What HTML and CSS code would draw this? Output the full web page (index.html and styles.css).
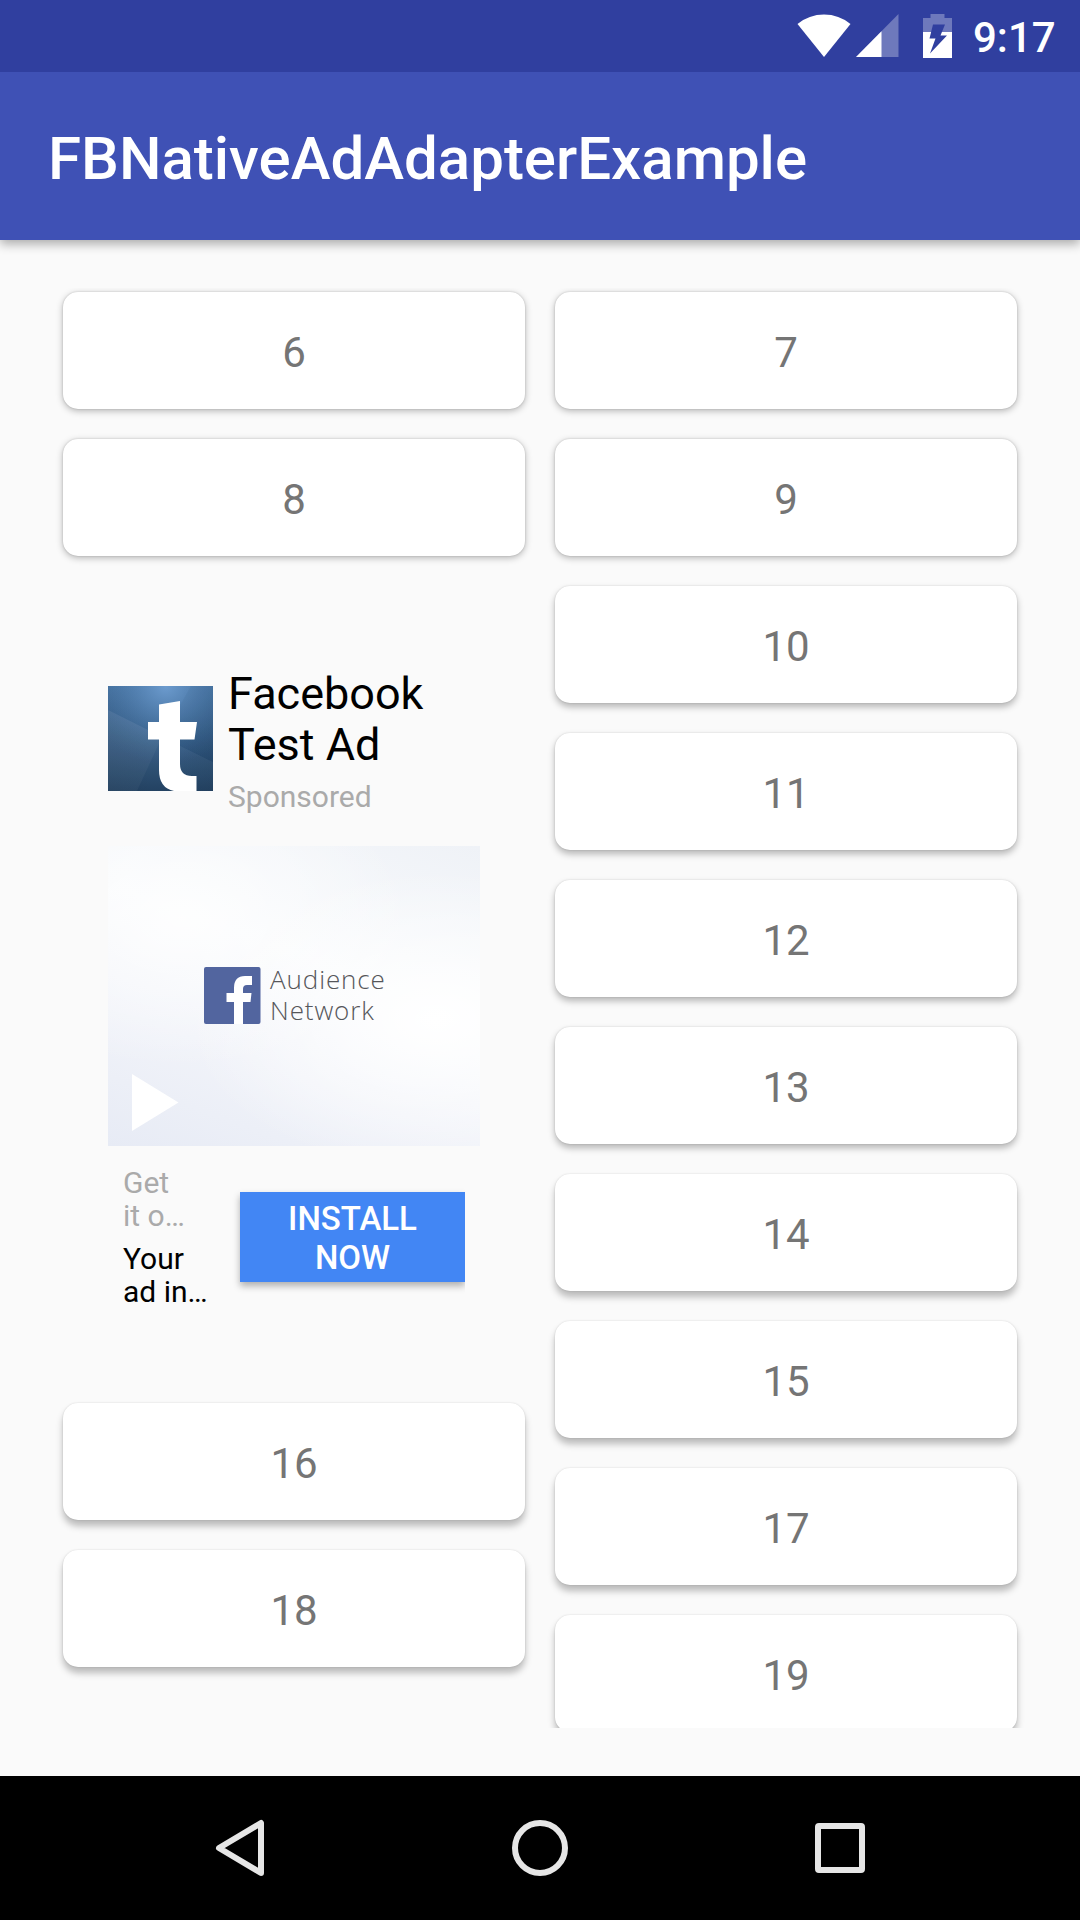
FILE: index.html
```html
<!DOCTYPE html>
<html lang="en">
<head>
<meta charset="utf-8">
<title>FBNativeAdAdapterExample</title>
<link rel="stylesheet" href="styles.css">
</head>
<body>
<div class="screen">
  <div class="status-bar">
    <svg class="wifi" width="54" height="44" viewBox="0 0 54 44"><path d="M27 43 L0.5 10 Q12 0.5 27 0.5 Q42 0.5 53.5 10 Z" fill="#fff"/></svg>
    <svg class="signal" width="43" height="43" viewBox="0 0 43 43"><path d="M0 43 L42.500 0 V43 Z" fill="#fff" fill-opacity=".3"/><path d="M0 43 L25.500 17.200 V43 Z" fill="#fff"/></svg>
    <svg class="battery" width="29" height="44" viewBox="0 0 29 44">
      <path d="M7.500 0 H21.500 V4 H29 V18 H0 V4 H7.500 Z" fill="#fff" fill-opacity=".3"/>
      <path d="M0 18 H29 V44 H0 Z" fill="#fff"/>
      <path d="M10 10.500 H22 L17.500 21.500 H24 L7 39.500 L12.500 24.500 H6.500 Z" fill="#303f9f"/>
    </svg>
    <span class="clock">9:17</span>
  </div>
  <header class="toolbar"><h1 class="title">FBNativeAdAdapterExample</h1></header>
  <main class="content">
    <div class="list">
      <div class="column">
        <div class="card high">6</div>
        <div class="card high">8</div>
        <section class="ad">
          <div class="ad-head">
            <svg class="ad-icon" width="105" height="105" viewBox="0 0 105 105">
              <defs>
                <linearGradient id="base" x1="0" y1="0" x2="0" y2="1"><stop offset="0" stop-color="#4d7cae"/><stop offset="1" stop-color="#1b3b5c"/></linearGradient>
                <radialGradient id="glow" cx=".55" cy="0" r=".75"><stop offset="0" stop-color="#709fd2" stop-opacity=".9"/><stop offset="1" stop-color="#39648f" stop-opacity="0"/></radialGradient>
                <linearGradient id="edge" x1="0" y1="0" x2="1" y2="0"><stop offset="0" stop-color="#123" stop-opacity=".1"/><stop offset=".4" stop-color="#123" stop-opacity="0"/><stop offset=".7" stop-color="#123" stop-opacity="0"/><stop offset="1" stop-color="#123" stop-opacity=".1"/></linearGradient>
              </defs>
              <rect width="105" height="105" fill="url(#base)"/>
              <rect width="105" height="105" fill="url(#edge)"/>
              <rect width="105" height="105" fill="url(#glow)"/>
              <path d="M0 24 L54 51 L29 105 H0 Z M54 51 L105 76 V105 H29 Z" fill="#fff" fill-opacity=".04"/>
              <path d="M0 24 L54 51 L29 105 H0 Z" fill="#fff" fill-opacity=".04"/>
              <path d="M83 0 H105 V76 L54 51 Z" fill="#0b2b50" fill-opacity=".06"/>
              <path d="M51 18.500 L72 15 V36 H89 L86.500 53.500 H72 V78 Q72 90 84 90 H88.500 V105 H66 Q51 102 51 84 V53.500 H40 V36 H51 Z" fill="#fff"/>
            </svg>
            <div class="ad-heading">
              <div class="ad-title">Facebook<br>Test Ad</div>
              <div class="ad-sponsored">Sponsored</div>
            </div>
          </div>
          <div class="media">
            <div class="brand">
              <svg width="57" height="57" viewBox="0 0 57 57"><rect width="56.500" height="57" rx="2" fill="#52659f"/><path d="M30 57 V35 H22.500 V26 H30 V21 Q30 9 41 9 H48 V18 H43 Q39 18 39 22 V26 H47.500 L46.500 35 H39 V57 Z" fill="#fff"/></svg>
              <div class="brand-name">Audience<br>Network</div>
            </div>
            <svg class="play" width="47" height="57" viewBox="0 0 47 57"><path d="M0 0 L46.500 28.500 L0 57 Z" fill="#fff"/></svg>
          </div>
          <div class="ad-foot">
            <div class="ad-copy">
              <div class="ad-social">Get<br>it o…</div>
              <div class="ad-body">Your<br>ad in…</div>
            </div>
            <div class="cta-clip"><div class="cta">INSTALL<br>NOW</div></div>
          </div>
        </section>
        <div class="card low">16</div>
        <div class="card low">18</div>
      </div>
      <div class="column">
        <div class="card high">7</div>
        <div class="card high">9</div>
        <div class="card mid">10</div>
        <div class="card mid">11</div>
        <div class="card mid">12</div>
        <div class="card mid">13</div>
        <div class="card low">14</div>
        <div class="card low">15</div>
        <div class="card low">17</div>
        <div class="card low">19</div>
      </div>
    </div>
  </main>
  <nav class="nav-bar">
    <svg width="60" height="60" viewBox="0 0 60 60"><path d="M51 5 V55 L9 30 Z" fill="none" stroke="#e6e6e6" stroke-width="6" stroke-linejoin="round"/></svg>
    <svg width="60" height="60" viewBox="0 0 60 60"><circle cx="30" cy="30" r="25" fill="none" stroke="#e6e6e6" stroke-width="6"/></svg>
    <svg width="60" height="60" viewBox="0 0 60 60"><rect x="8" y="8" width="44" height="44" rx="1" fill="none" stroke="#e6e6e6" stroke-width="6" stroke-linejoin="round"/></svg>
  </nav>
</div>
</body>
</html>
```
FILE: styles.css
```css
* { box-sizing: border-box; }
body { margin: 0; font-family: Roboto, sans-serif; background: #fafafa; }
svg { display: block; flex: none; }

.screen { width: 1080px; height: 1920px; display: flex; flex-direction: column; overflow: hidden; }

.status-bar { height: 72px; flex: none; background: #303f9f; display: flex; justify-content: flex-end; align-items: flex-start; padding: 14px 24px 0 0; position: relative; z-index: 2; }
.signal { margin-left: 5px; }
.battery { margin-left: 24.3px; }
.clock { margin-left: 21px; width: 83px; padding-top: 1px; color: #fff; font-size: 42px; line-height: 46px; font-weight: 500; white-space: nowrap; }

.toolbar { height: 168px; flex: none; background: #3f51b5; display: flex; align-items: center; padding: 6px 48px 0; box-shadow: 0 4px 10px rgba(0, 0, 0, .32); position: relative; z-index: 1; }
.title { margin: 0; color: #fff; font-size: 60px; line-height: 70px; font-weight: 500; }

.content { flex: 1; min-height: 0; padding: 48px; }
.list { height: 100%; overflow: hidden; display: grid; grid-template-columns: 462px 462px; column-gap: 30px; padding: 4px 15px 0; align-items: start; }
.column { display: flex; flex-direction: column; gap: 30px; }

.card { height: 117px; flex: none; background: #fff; border-radius: 15px; color: #757575; font-size: 42px; line-height: 50px; display: flex; align-items: center; justify-content: center; padding-top: 4px; }
.high { box-shadow: 0 2px 7px rgba(0, 0, 0, .28), 0 0 2px rgba(0, 0, 0, .18); }
.mid { box-shadow: 0 4px 7px rgba(0, 0, 0, .28), 0 0 2px rgba(0, 0, 0, .14); }
.low { box-shadow: 0 6px 7px rgba(0, 0, 0, .26), 0 0 2px rgba(0, 0, 0, .14); }

.ad { height: 787px; flex: none; padding: 79px 45px 0; }
.ad-head { height: 181px; display: flex; gap: 15px; }
.ad-icon { margin-top: 21px; }
.ad-title { color: #000; font-size: 45px; line-height: 51px; padding-top: 3px; }
.ad-sponsored { color: #aaa; font-size: 30px; line-height: 36px; margin-top: 9px; }

.media { height: 300px; position: relative; display: flex; align-items: center; justify-content: center; background: radial-gradient(ellipse 250px 150px at 88% 58%, #fff 0%, rgba(255, 255, 255, 0) 100%), radial-gradient(ellipse 230px 150px at 20% 24%, rgba(255, 255, 255, .8) 0%, rgba(255, 255, 255, 0) 100%), linear-gradient(20deg, #e7ebf5 0%, #f1f3f9 32%, #f8fafc 60%, #eff2f7 100%); }
.brand { display: flex; gap: 9px; width: 180px; }
.brand-name { font-family: "Open Sans", sans-serif; font-weight: 300; font-size: 26px; line-height: 31px; letter-spacing: .9px; color: #55565a; margin-top: -3px; }
.play { position: absolute; left: 24px; bottom: 15px; }

.ad-foot { display: flex; justify-content: space-between; padding: 19px 15px 0; }
.ad-copy { font-size: 30px; line-height: 33px; white-space: nowrap; padding-top: 1px; }
.ad-social { color: #aaa; }
.ad-body { color: #000; margin-top: 10px; }
.cta-clip { width: 240px; padding: 27px 0 20px 15px; overflow: hidden; }
.cta { height: 90px; background: #4286f4; color: #fff; font-size: 33px; line-height: 39px; font-weight: 500; text-align: center; padding-top: 7px; box-shadow: 0 4px 7px rgba(0, 0, 0, .3); }

.nav-bar { height: 144px; flex: none; background: #000; display: grid; grid-template-columns: 60px 60px 60px; justify-content: center; gap: 240px; align-items: center; }
```
